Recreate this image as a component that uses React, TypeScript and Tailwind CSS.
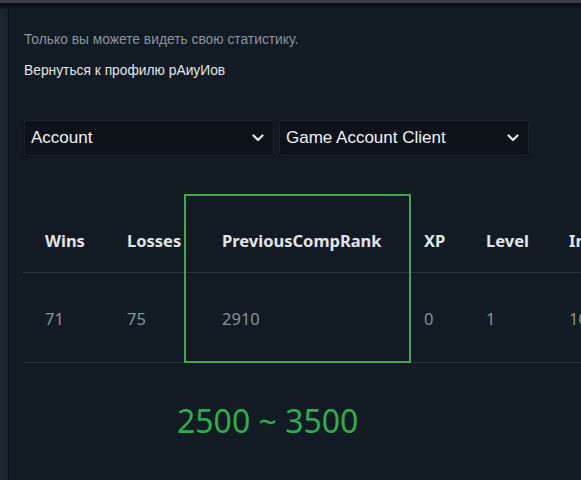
import React from 'react';

const columns = [
  { key: 'Wins', value: '71', width: 'w-[82px]' },
  { key: 'Losses', value: '75', width: 'w-[95px]' },
  { key: 'PreviousCompRank', value: '2910', width: 'w-[202px]' },
  { key: 'XP', value: '0', width: 'w-[62px]' },
  { key: 'Level', value: '1', width: 'w-[83px]' },
  { key: 'InventoryValue', value: '10', width: 'w-[180px]' },
];

const Chevron: React.FC = () => (
  <svg width="12" height="8" viewBox="0 0 12 8" fill="none" className="shrink-0">
    <path d="M1.5 1.5L6 6L10.5 1.5" stroke="#e8eaec" strokeWidth="2.2" strokeLinecap="round" strokeLinejoin="round" />
  </svg>
);

const Select: React.FC<{ label: string }> = ({ label }) => (
  <div className="w-[250px] h-[36px] bg-[#0d1219] border border-[#1b222b] rounded-[3px] flex items-center justify-between pl-[6px] pr-[9px] shadow-[0_1px_2px_rgba(0,0,0,0.4)]">
    <span className="text-[17px] text-[#f2f3f4]">{label}</span>
    <Chevron />
  </div>
);

const App: React.FC = () => {
  return (
    <div className="w-[581px] h-[480px] overflow-hidden bg-[#121a24] flex flex-col font-['Liberation_Sans',Arial,sans-serif]">
      {/* top border */}
      <div className="h-[3px] bg-[#3b3e46] shrink-0" />
      <div className="h-[6px] bg-gradient-to-b from-[#0a0e15] to-[#121a24] shrink-0" />

      <div className="flex flex-1 min-h-0">
        {/* left strip */}
        <div className="w-[8px] bg-gradient-to-r from-[#1e2835] to-[#18212c] shrink-0" />
        <div className="w-[1px] bg-[#0b1017] shrink-0" />

        <main className="flex-1 min-w-0 pl-[15px] pt-[22px]">
          <p className="text-[13.8px] text-[#8d949c] leading-[18px]">Только вы можете видеть свою статистику.</p>
          <p className="mt-[13px] text-[13.8px] text-[#e4e6e8] leading-[18px]">Вернуться к профилю pАиуИов</p>

          <div className="mt-[40px] flex gap-[5px]">
            <Select label="Account" />
            <Select label="Game Account Client" />
          </div>

          <div className="relative mt-[54px] -ml-[1px] font-['Noto_Sans',sans-serif]">
            <table className="border-collapse table-fixed w-[704px]">
              <thead>
                <tr className="h-[62px] border-b border-[#27303b]">
                  {columns.map((c) => (
                    <th key={c.key} className={`${c.width} text-left align-middle pl-[22px] pt-[2px] text-[16.5px] font-bold text-[#e1e4e7] whitespace-nowrap`}>
                      {c.key}
                    </th>
                  ))}
                </tr>
              </thead>
              <tbody>
                <tr className="h-[90px] border-b border-[#27303b]">
                  {columns.map((c) => (
                    <td key={c.key} className="text-left align-middle pl-[22px] pt-[4px] text-[16.5px] text-[#8a9199] whitespace-nowrap">
                      {c.value}
                    </td>
                  ))}
                </tr>
              </tbody>
            </table>
            <div className="absolute left-[161px] top-[-16px] w-[227px] h-[169px] border-2 border-[#3aaa4c] pointer-events-none" />
          </div>

          <div className="mt-[40px] pl-[153px] text-[32px] leading-[36px] text-[#2eae4b] font-['Noto_Sans',sans-serif]">
            2500 ~ 3500
          </div>
        </main>
      </div>
    </div>
  );
};

export default App;
